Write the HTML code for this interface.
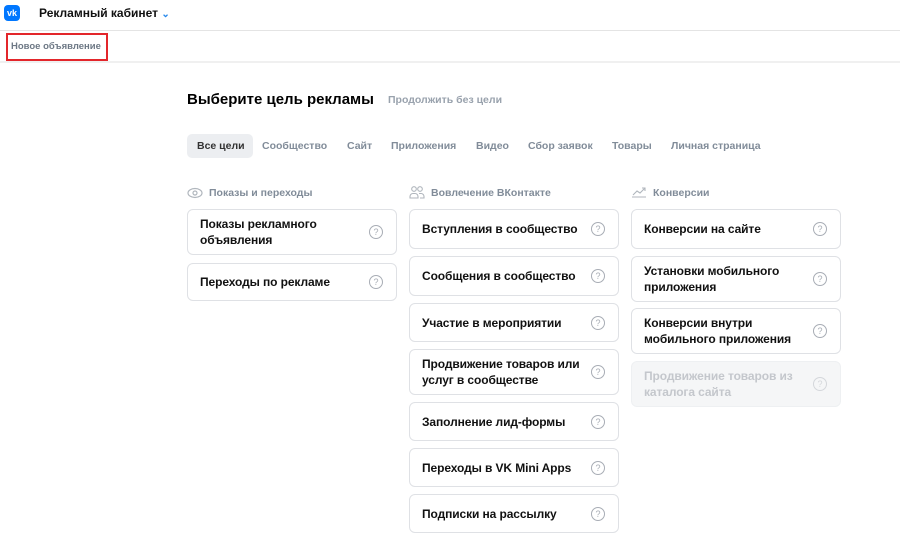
<!DOCTYPE html>
<html><head><meta charset="utf-8"><style>
*{margin:0;padding:0;box-sizing:border-box}
body{width:900px;height:524px;background:#fff;font-family:"Liberation Sans",sans-serif;position:relative;overflow:hidden;color:#000}
.a{position:absolute}
.top{left:0;top:0;width:900px;height:31px;border-bottom:1px solid #e4e4e4}
.sub{left:0;top:32px;width:900px;height:31px;border-bottom:2px solid #f0f0f0}
.card{position:absolute;width:210px;border:1px solid #dfe1e5;border-radius:6px;font-weight:bold;font-size:12px;letter-spacing:-0.1px;line-height:16px;padding:0 34px 0 12px;display:flex;align-items:center;color:#111}
.card .q{position:absolute;right:13px;top:50%;margin-top:-7px;width:14px;height:14px;border:1.2px solid #a8adb5;border-radius:50%;font-size:9px;line-height:12px;text-align:center;color:#a8adb5;font-weight:normal}
.dis{background:#f5f6f7;border-color:#eef0f2;color:#c4c7cc}
.dis .q{border-color:#d4d7db;color:#d4d7db}
.hd{font-size:10.5px;font-weight:bold;color:#818c99;top:187px}
.tab{font-size:10.5px;font-weight:bold;color:#818c99;top:140px}
</style></head><body>
<div class="a top"></div>
<div class="a" style="left:4px;top:5px;width:16px;height:16px;background:#0077ff;border-radius:4px;color:#fff;font-size:9px;font-weight:bold;text-align:center;line-height:16px">vk</div>
<div class="a" style="left:39px;top:6px;font-size:12px;font-weight:bold;color:#111">Рекламный кабинет <span style="color:#2688eb;font-size:10px">&#8964;</span></div>
<div class="a sub"></div>
<div class="a" style="left:6px;top:33px;width:102px;height:28px;border:2px solid #e3262b"></div>
<div class="a" style="left:11px;top:41px;font-size:9.5px;font-weight:bold;color:#6d7885">Новое объявление</div>

<div class="a" style="left:187px;top:91px;font-size:15px;font-weight:bold;color:#000">Выберите цель рекламы</div>
<div class="a" style="left:388px;top:94px;font-size:10.5px;font-weight:bold;color:#99a2ad">Продолжить без цели</div>

<div class="a" style="left:187px;top:134px;width:66px;height:24px;background:#eceef1;border-radius:5px"></div>
<div class="a tab" style="left:197px;color:#333">Все цели</div>
<div class="a tab" style="left:262px">Сообщество</div>
<div class="a tab" style="left:347px">Сайт</div>
<div class="a tab" style="left:391px">Приложения</div>
<div class="a tab" style="left:476px">Видео</div>
<div class="a tab" style="left:528px">Сбор заявок</div>
<div class="a tab" style="left:612px">Товары</div>
<div class="a tab" style="left:671px">Личная страница</div>

<svg class="a" style="left:187px;top:187px" width="16" height="12" viewBox="0 0 16 12"><ellipse cx="8" cy="6" rx="7" ry="4.5" fill="none" stroke="#b0b6bd" stroke-width="1.2"/><circle cx="8" cy="6" r="2" fill="none" stroke="#b0b6bd" stroke-width="1.2"/></svg>
<div class="a hd" style="left:209px">Показы и переходы</div>
<svg class="a" style="left:409px;top:185px" width="16" height="14" viewBox="0 0 16 14"><circle cx="5" cy="4" r="2.3" fill="none" stroke="#b0b6bd" stroke-width="1.1"/><circle cx="11" cy="4" r="2.3" fill="none" stroke="#b0b6bd" stroke-width="1.1"/><path d="M1 13v-1.5a3 3 0 0 1 3-3h2a3 3 0 0 1 3 3V13zM10 8.5h2a3 3 0 0 1 3 3V13h-4" fill="none" stroke="#b0b6bd" stroke-width="1.1"/></svg>
<div class="a hd" style="left:431px">Вовлечение ВКонтакте</div>
<svg class="a" style="left:631px;top:186px" width="16" height="12" viewBox="0 0 16 12"><path d="M1 11h14M2 9l4-4 3 2 5-5M11 2h3v3" fill="none" stroke="#b0b6bd" stroke-width="1.1"/></svg>
<div class="a hd" style="left:653px">Конверсии</div>

<div class="card" style="left:187px;top:209px;height:46px">Показы рекламного объявления<span class="q">?</span></div>
<div class="card" style="left:187px;top:263px;height:38px">Переходы по рекламе<span class="q">?</span></div>

<div class="card" style="left:409px;top:209px;height:40px">Вступления в сообщество<span class="q">?</span></div>
<div class="card" style="left:409px;top:256px;height:40px">Сообщения в сообщество<span class="q">?</span></div>
<div class="card" style="left:409px;top:303px;height:39px">Участие в мероприятии<span class="q">?</span></div>
<div class="card" style="left:409px;top:349px;height:46px">Продвижение товаров или услуг в сообществе<span class="q">?</span></div>
<div class="card" style="left:409px;top:402px;height:39px">Заполнение лид-формы<span class="q">?</span></div>
<div class="card" style="left:409px;top:448px;height:39px">Переходы в VK Mini Apps<span class="q">?</span></div>
<div class="card" style="left:409px;top:494px;height:39px">Подписки на рассылку<span class="q">?</span></div>

<div class="card" style="left:631px;top:209px;height:40px">Конверсии на сайте<span class="q">?</span></div>
<div class="card" style="left:631px;top:256px;height:46px">Установки мобильного приложения<span class="q">?</span></div>
<div class="card" style="left:631px;top:308px;height:46px">Конверсии внутри мобильного приложения<span class="q">?</span></div>
<div class="card dis" style="left:631px;top:361px;height:46px">Продвижение товаров из каталога сайта<span class="q">?</span></div>
</body></html>
